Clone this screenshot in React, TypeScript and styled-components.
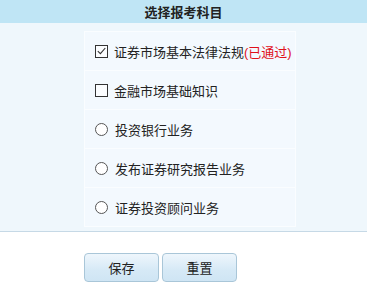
import React from 'react';
import styled, { createGlobalStyle } from 'styled-components';

const GlobalStyle = createGlobalStyle`
  body {
    margin: 0;
    background: #fff;
    font-family: "Noto Sans CJK SC", "Noto Sans", sans-serif;
    color: #222;
  }
`

const Page = styled.div`
  width: 367px;
`

const Header = styled.div`
  height: 23px;
  line-height: 23px;
  background: #bfe5f5;
  text-align: center;
  font-size: 13px;
  font-weight: bold;
  color: #222;
`

const Body = styled.div`
  background: #eff7fc;
  padding: 8px 0 4px 84px;
  border-bottom: 1px solid #c6d9e6;
`

const List = styled.div`
  width: 210px;
  border: 1px solid #fafdff;
  border-top: none;
`

const Row = styled.label`
  display: flex;
  align-items: center;
  height: 38px;
  border-top: 1px solid #fafdff;
  background: #f3f9fe;
  padding-left: 10px;
  font-size: 13px;
  color: #222;
`

const Box = styled.span`
  box-sizing: border-box;
  width: 13px;
  height: 13px;
  border: 1px solid #333;
  background: #fbfdff;
  margin-right: 6px;
  display: inline-flex;
  align-items: center;
  justify-content: center;
  flex-shrink: 0;
`

const Radio = styled(Box)`
  border-radius: 50%;
  border-color: #555;
  background: #fff;
  margin-right: 7px;
`

const Passed = styled.span`
  color: #e0101a;
  font-family: "Liberation Sans", "Noto Sans CJK SC", sans-serif;
`

const Footer = styled.div`
  display: flex;
  gap: 3px;
  padding: 21px 0 0 84px;
`

const Button = styled.button`
  width: 75px;
  height: 29px;
  border: 1px solid #a9c6d8;
  border-radius: 4px;
  background: linear-gradient(#eef6fc, #d6e9f6 60%, #cfe5f4);
  font-family: "Noto Sans CJK SC", "Noto Sans", sans-serif;
  font-size: 13px;
  color: #222;
  padding: 0;
`

const Check = () => (
  <svg width="9" height="8" viewBox="0 0 9 8">
    <path d="M0.8 4.2 L3.4 6.6 L8.3 1" fill="none" stroke="#333" strokeWidth="1.1" />
  </svg>
)

type Subject = {
  name: string
  kind: 'check' | 'radio'
  checked?: boolean
  passed?: boolean
}

const subjects: Subject[] = [
  { name: '证券市场基本法律法规', kind: 'check', checked: true, passed: true },
  { name: '金融市场基础知识', kind: 'check' },
  { name: '投资银行业务', kind: 'radio' },
  { name: '发布证券研究报告业务', kind: 'radio' },
  { name: '证券投资顾问业务', kind: 'radio' },
]

const App: React.FC = () => {
  return (
    <Page>
      <GlobalStyle />
      <Header>选择报考科目</Header>
      <Body>
        <List>
          {subjects.map((s) => (
            <Row key={s.name}>
              {s.kind === 'check' ? <Box>{s.checked && <Check />}</Box> : <Radio />}
              <span>{s.name}</span>
              {s.passed && <Passed>(已通过)</Passed>}
            </Row>
          ))}
        </List>
      </Body>
      <Footer>
        <Button>保存</Button>
        <Button>重置</Button>
      </Footer>
    </Page>
  )
}

export default App
